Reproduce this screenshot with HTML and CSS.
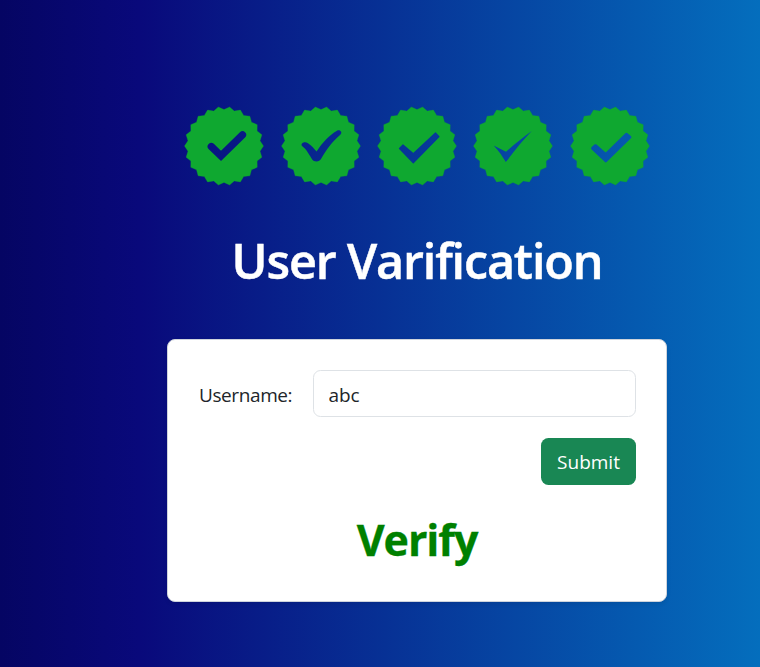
FILE: index.html
```html
<!DOCTYPE html>
<html lang="en">
<head>
<meta charset="utf-8">
<title>User Varification</title>
<link rel="stylesheet" href="styles.css">
</head>
<body>
<svg class="defs" aria-hidden="true">
  <defs>
    <path id="seal" d="M39.5 0L36.03 5.18 37.9 11.13 33.11 15.12 33.23 21.36 27.51 23.84 25.87 29.85 19.68 30.62 16.41 35.93 10.25 34.93 5.62 39.1 0 36.4 -5.62 39.1 -10.25 34.93 -16.41 35.93 -19.68 30.62 -25.87 29.85 -27.51 23.84 -33.23 21.36 -33.11 15.12 -37.9 11.13 -36.03 5.18 -39.5 0 -36.03 -5.18 -37.9 -11.13 -33.11 -15.12 -33.23 -21.36 -27.51 -23.84 -25.87 -29.85 -19.68 -30.62 -16.41 -35.93 -10.25 -34.93 -5.62 -39.1 0 -36.4 5.62 -39.1 10.25 -34.93 16.41 -35.93 19.68 -30.62 25.87 -29.85 27.51 -23.84 33.23 -21.36 33.11 -15.12 37.9 -11.13 36.03 -5.18Z"/>
    <mask id="m1" maskUnits="userSpaceOnUse" x="-40" y="-40" width="80" height="80"><rect x="-40" y="-40" width="80" height="80" fill="#fff"/><path d="M-12.7 .5L-3 9.8L18.5 -11.2" fill="none" stroke="#000" stroke-width="7.3" stroke-linecap="round"/></mask>
    <mask id="m2" maskUnits="userSpaceOnUse" x="-40" y="-40" width="80" height="80"><rect x="-40" y="-40" width="80" height="80" fill="#fff"/><path d="M-19.2 -.2C-20.5 -3 -16 -4.8 -13 -2.8C-9 0 -7 2.5 -4.4 5.6C1.5 -3.5 8 -10.5 16 -15.2C19 -16.8 22 -13.6 19.3 -11.2C11 -4 5.5 3.5 0 13C-1.7 16.2 -7 16.2 -9 13.2C-12.5 7.5 -14.5 3.5 -19.2 -.2Z"/></mask>
    <mask id="m3" maskUnits="userSpaceOnUse" x="-40" y="-40" width="80" height="80"><rect x="-40" y="-40" width="80" height="80" fill="#fff"/><path d="M-17.5 2.5L-14 -1.1L-3.7 7.8L18.5 -13L22 -9.3L-3.7 16.8Z" stroke="#000" stroke-width="1.2" stroke-linejoin="round"/></mask>
    <mask id="m4" maskUnits="userSpaceOnUse" x="-40" y="-40" width="80" height="80"><rect x="-40" y="-40" width="80" height="80" fill="#fff"/><path d="M-19.3 -.5L-7 5.8C1 -1.8 10 -8.5 18.8 -15C9.5 -5.5 1.5 5 -7.2 16C-10.5 10.5 -14 5.2 -19.3 -.5Z"/></mask>
    <mask id="m5" maskUnits="userSpaceOnUse" x="-40" y="-40" width="80" height="80"><rect x="-40" y="-40" width="80" height="80" fill="#fff"/><path d="M-17.3 2.3L-14.5 -.2L-4.2 8.6L16.5 -11.5L19.8 -8.8L-4.2 14.7Z" stroke="#000" stroke-width="3.2" stroke-linejoin="round"/></mask>
  </defs>
</svg>
<main class="page">
  <div class="badges">
    <svg class="badge" viewBox="-40 -40 80 80"><use href="#seal" mask="url(#m1)"/></svg>
    <svg class="badge" viewBox="-40 -40 80 80"><use href="#seal" mask="url(#m2)"/></svg>
    <svg class="badge" viewBox="-40 -40 80 80"><use href="#seal" mask="url(#m3)"/></svg>
    <svg class="badge" viewBox="-40 -40 80 80"><use href="#seal" mask="url(#m4)"/></svg>
    <svg class="badge" viewBox="-40 -40 80 80"><use href="#seal" mask="url(#m5)"/></svg>
  </div>
  <h1 class="title">User Varification</h1>
  <form class="card">
    <div class="row">
      <label class="label" for="username">Username:</label>
      <input class="input" id="username" type="text" value="abc">
    </div>
    <button class="submit" type="button">Submit</button>
    <h2 class="result">Verify</h2>
  </form>
</main>
</body>
</html>
```
FILE: styles.css
```css
* { box-sizing: border-box; }
html { overflow: hidden; }
body {
  margin: 0;
  height: 667px;
  overflow: hidden;
  font-family: "Open Sans", "Noto Sans", sans-serif;
  background: linear-gradient(90deg, #050563 0, #09097b 140px, #046ebd 760px);
}
.defs { position: absolute; width: 0; height: 0; }
.page {
  width: 500px;
  margin-left: 167px;
  padding-top: 106px;
  display: flex;
  flex-direction: column;
  align-items: center;
}
.badges { display: flex; gap: 16.35px; }
.badge {
  display: block;
  width: 80px;
  height: 80px;
  flex: none;
  fill: #0fa830;
  stroke: #0fa830;
  stroke-opacity: .5;
  stroke-width: .6;
}
.badge:first-child { margin-left: .3px; }
.title {
  margin: 44px 0 0;
  height: 60px;
  line-height: 60px;
  font-size: 48.5px;
  font-weight: 600;
  letter-spacing: -1.15px;
  color: #fff;
  white-space: nowrap;
  -webkit-text-stroke: .5px #fff;
}
.card {
  width: 500px;
  height: 263px;
  margin-top: 49px;
  padding: 30px;
  display: flex;
  flex-direction: column;
  border: 1px solid #cfd4dc;
  border-radius: 8px;
  background: #fff;
  box-shadow: 0 2px 4px rgba(0, 0, 0, .08);
}
.row { display: flex; align-items: center; }
.label {
  width: 115px;
  padding: 2px 0 0 1px;
  font-size: 19px;
  letter-spacing: -.4px;
  color: #212529;
}
.input {
  width: 323px;
  height: 47px;
  padding: 3px 15px 0 14.5px;
  border: 1px solid #dee2e6;
  border-radius: 7.5px;
  font: 19px "Open Sans", "Noto Sans", sans-serif;
  letter-spacing: -.1px;
  color: #212529;
  background: #fff;
}
.submit {
  align-self: flex-end;
  width: 95px;
  height: 47px;
  margin-top: 21px;
  padding: 0;
  border: 0;
  border-radius: 7.5px;
  font: 19px "Open Sans", "Noto Sans", sans-serif;
  color: #fff;
  background: #198754;
}
.result {
  margin: 27px 0 0;
  line-height: 55px;
  text-align: center;
  font-size: 43px;
  font-weight: 700;
  letter-spacing: -1.1px;
  color: green;
  -webkit-text-stroke: .3px green;
}
```
